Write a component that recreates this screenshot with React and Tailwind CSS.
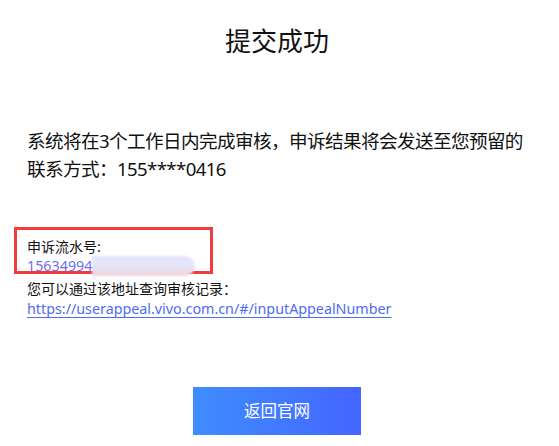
export default function App() {
  const font = { fontFamily: '"Noto Sans", "Noto Sans CJK SC", sans-serif' };
  return (
    <div className="w-[554px] h-[446px] bg-white text-black" style={font}>
      <div className="pt-[23px] text-center text-[26px] leading-[36px] text-[#111]">提交成功</div>
      <div className="mt-[68px] pl-[27px] text-[18.6px] leading-[28px] text-[#111] whitespace-nowrap tracking-[-0.6px]">
        <p>系统将在3个工作日内完成审核，申诉结果将会发送至您预留的</p>
        <p>联系方式：155****0416</p>
      </div>
      <div className="relative mt-[54px] ml-[27px] text-[14px] text-[#111]">
        <div className="absolute left-[-13px] top-[-10px] w-[199px] h-[47px] border-[3px] border-[#f03c3c]" />
        <div className="leading-[19px]">申诉流水号:</div>
        <div className="flex items-center leading-[20px] h-[20px]">
          <span className="text-[#6b70f2] text-[14.3px]">15634994</span>
          <span className="inline-block w-[103px] h-[20px] rounded-r-full bg-gradient-to-b from-[#e2e6fc] via-[#e6e4f8] to-[#f0d4dc] blur-[1px]" />
        </div>
        <div className="mt-[3px] leading-[20px]">您可以通过该地址查询审核记录：</div>
        <div className="leading-[20px]">
          <a className="text-[14.3px] text-[#4d6cf5] underline underline-offset-[3px] decoration-[#4d6cf5]" href="#">
            https://userappeal.vivo.com.cn/#/inputAppealNumber
          </a>
        </div>
      </div>
      <div className="mt-[68px] flex justify-center">
        <div className="w-[168px] h-[48px] flex items-center justify-center text-white text-[16.5px] bg-gradient-to-r from-[#3f8dff] to-[#4465ff]">
          返回官网
        </div>
      </div>
    </div>
  );
}
